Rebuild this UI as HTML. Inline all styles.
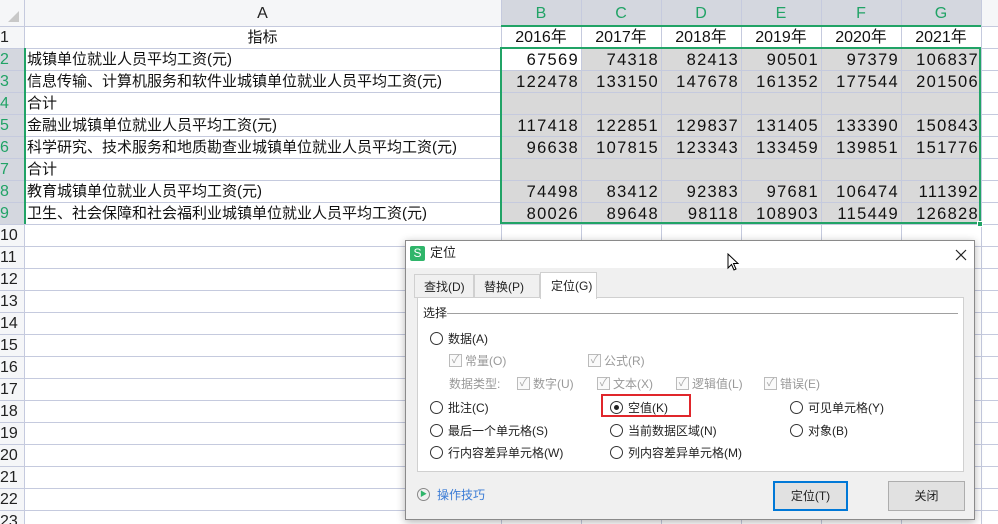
<!DOCTYPE html>
<html><head><meta charset="utf-8"><style>
*{margin:0;padding:0;box-sizing:border-box}
html,body{width:998px;height:524px;overflow:hidden}
body{background:#fff;font-family:"Liberation Sans","Noto Sans CJK SC",sans-serif;position:relative;font-size:15px;color:#111}
.a{position:absolute}
.hl{position:absolute;background:#c5cade;height:1px}
.vl{position:absolute;background:#c5cade;width:1px}
.t{position:absolute;white-space:nowrap;line-height:22px}
.n{font-size:16.5px;letter-spacing:1.3px}
.dlg{position:absolute;left:405px;top:240px;width:570px;height:280px;background:#f0f0f0;border:1px solid #8a8a8a;box-shadow:0 2px 8px rgba(0,0,0,.3);font-size:12px;color:#222}
.dlg .t{line-height:16px}
.rad{position:absolute;width:13px;height:13px;border:1px solid #333;border-radius:50%;background:#fff}
.chk{position:absolute;width:13px;height:13px;border:1px solid #bbb;background:#fafafa;color:#aaa;font-size:11px;line-height:11px;text-align:center}
.g{color:#999}
.btn{position:absolute;border:1px solid #adadad;background:#e1e1e1;text-align:center;line-height:26px;font-size:12px}
</style></head><body>
<div id="grid"></div>
<script>
var g=document.getElementById('grid'),h='';
h+='<div class="a" style="left:0;top:0;width:998px;height:26px;background:#f5f6f8"></div>';
h+='<div class="a" style="left:0;top:0;width:24px;height:524px;background:#f5f6f8"></div>';
h+='<div class="a" style="left:501px;top:0;width:480px;height:26px;background:#d4d7df"></div>';
h+='<div class="a" style="left:0;top:48px;width:24px;height:176px;background:#d4d7df"></div>';
h+='<div class="a" style="left:501px;top:48px;width:480px;height:176px;background:#d9d9d9"></div>';
h+='<div class="a" style="left:501px;top:48px;width:80px;height:22px;background:#fff"></div>';
h+='<div class="a" style="left:8px;top:11px;width:0;height:0;border-left:11px solid transparent;border-bottom:11px solid #c8c8c8"></div>';
for(var r=0;r<23;r++){var y=26+22*r;h+='<div class="hl" style="left:0;top:'+y+'px;width:998px"></div>';}
var cx=[24,501,581,661,741,821,901,981];
cx.forEach(function(x){h+='<div class="vl" style="left:'+x+'px;top:0;height:524px"></div>';});
var L=['A','B','C','D','E','F','G'];
for(var i=0;i<7;i++){h+='<div class="t" style="left:'+cx[i]+'px;width:'+(cx[i+1]-cx[i])+'px;top:3px;text-align:center;font-size:16px;color:'+(i?'#21a366':'#222')+'">'+L[i]+'</div>';}
for(var r=1;r<=23;r++){h+='<div class="t" style="left:0;top:'+(26+22*(r-1)+1)+'px;font-size:16px;color:'+(r>=2&&r<=9?'#21a366':'#222')+'">'+r+'</div>';}
var A=['指标','城镇单位就业人员平均工资(元)','信息传输、计算机服务和软件业城镇单位就业人员平均工资(元)','合计','金融业城镇单位就业人员平均工资(元)','科学研究、技术服务和地质勘查业城镇单位就业人员平均工资(元)','合计','教育城镇单位就业人员平均工资(元)','卫生、社会保障和社会福利业城镇单位就业人员平均工资(元)'];
A.forEach(function(s,i){h+='<div class="t" style="top:'+(27+22*i)+'px;'+(i==0?'left:24px;width:477px;text-align:center':'left:27px')+'">'+s+'</div>';});
var D=[['2016年','2017年','2018年','2019年','2020年','2021年'],[67569,74318,82413,90501,97379,106837],[122478,133150,147678,161352,177544,201506],[],[117418,122851,129837,131405,133390,150843],[96638,107815,123343,133459,139851,151776],[],[74498,83412,92383,97681,106474,111392],[80026,89648,98118,108903,115449,126828]];
D.forEach(function(row,i){row.forEach(function(v,j){h+='<div class="t n" style="top:'+(27+22*i)+'px;left:'+cx[j+1]+'px;width:80px;'+(i==0?'text-align:center;letter-spacing:0;font-size:16px':'text-align:right;padding-right:2px')+'">'+v+'</div>';});});
h+='<div class="a" style="left:501px;top:25px;width:480px;height:2px;background:#21a366"></div>';
h+='<div class="a" style="left:24px;top:48px;width:2px;height:176px;background:#21a366"></div>';
h+='<div class="a" style="left:500px;top:47px;width:481px;height:177px;border:2px solid #21a366"></div>';
h+='<div class="a" style="left:977px;top:221px;width:6px;height:6px;background:#21a366;border:1px solid #fff"></div>';
g.innerHTML=h;
</script>
<div class="dlg">
 <div class="a" style="left:0;top:0;width:568px;height:27px;background:#fff"></div>
 <div class="a" style="left:4px;top:5px;width:15px;height:15px;background:#2fb56a;border-radius:2px;color:#fff;font-size:12px;line-height:15px;text-align:center">S</div>
 <div class="t" style="left:24px;top:4px;font-size:13px">定位</div>
 <svg class="a" style="left:549px;top:8px" width="12" height="12" viewBox="0 0 12 12"><path d="M1 1L11 11M11 1L1 11" stroke="#222" stroke-width="1.2"/></svg>
 <svg class="a" style="left:321px;top:12px" width="14" height="20" viewBox="0 0 14 20"><path d="M1 1 L1 15 L4.5 11.5 L7 17 L9 16 L6.5 10.5 L11 10.5 Z" fill="#fff" stroke="#000" stroke-width="1"/></svg>
 <div class="a" style="left:8px;top:33px;width:60px;height:24px;border:1px solid #d0d0d0;background:#f0f0f0"></div>
 <div class="t" style="left:18px;top:38px">查找(D)</div>
 <div class="a" style="left:68px;top:33px;width:66px;height:24px;border:1px solid #d0d0d0;background:#f0f0f0"></div>
 <div class="t" style="left:78px;top:38px">替换(P)</div>
 <div class="a" style="left:11px;top:56px;width:547px;height:175px;border:1px solid #d0d0d0;background:#fff"></div>
 <div class="a" style="left:134px;top:31px;width:57px;height:27px;border:1px solid #d0d0d0;border-bottom:none;background:#fff"></div>
 <div class="t" style="left:145px;top:37px">定位(G)</div>
 <div class="t" style="left:17px;top:64px">选择</div>
 <div class="a" style="left:41px;top:72px;width:511px;height:1px;background:#a0a0a0"></div>
 <div class="rad" style="left:24px;top:91px"></div><div class="t" style="left:42px;top:90px">数据(A)</div>
 <div class="chk" style="left:43px;top:113px">✓</div><div class="t g" style="left:59px;top:112px">常量(O)</div>
 <div class="chk" style="left:182px;top:113px">✓</div><div class="t g" style="left:198px;top:112px">公式(R)</div>
 <div class="t g" style="left:43px;top:135px">数据类型:</div>
 <div class="chk" style="left:111px;top:136px">✓</div><div class="t g" style="left:127px;top:135px">数字(U)</div>
 <div class="chk" style="left:191px;top:136px">✓</div><div class="t g" style="left:207px;top:135px">文本(X)</div>
 <div class="chk" style="left:270px;top:136px">✓</div><div class="t g" style="left:286px;top:135px">逻辑值(L)</div>
 <div class="chk" style="left:358px;top:136px">✓</div><div class="t g" style="left:374px;top:135px">错误(E)</div>
 <div class="rad" style="left:24px;top:160px"></div><div class="t" style="left:42px;top:159px">批注(C)</div>
 <div class="a" style="left:195px;top:153px;width:90px;height:23px;border:2px solid #e0262b"></div>
 <div class="rad" style="left:204px;top:160px"></div><div class="a" style="left:208px;top:164px;width:5px;height:5px;border-radius:50%;background:#222"></div><div class="t" style="left:222px;top:159px">空值(K)</div>
 <div class="rad" style="left:384px;top:160px"></div><div class="t" style="left:402px;top:159px">可见单元格(Y)</div>
 <div class="rad" style="left:24px;top:183px"></div><div class="t" style="left:42px;top:182px">最后一个单元格(S)</div>
 <div class="rad" style="left:204px;top:183px"></div><div class="t" style="left:222px;top:182px">当前数据区域(N)</div>
 <div class="rad" style="left:384px;top:183px"></div><div class="t" style="left:402px;top:182px">对象(B)</div>
 <div class="rad" style="left:24px;top:205px"></div><div class="t" style="left:42px;top:204px">行内容差异单元格(W)</div>
 <div class="rad" style="left:204px;top:205px"></div><div class="t" style="left:222px;top:204px">列内容差异单元格(M)</div>
 <div class="a" style="left:11px;top:247px;width:13px;height:13px;border:1px solid #888;border-radius:50%;color:#2fb56a;font-size:7px;line-height:11px;text-align:center">▶</div>
 <div class="t" style="left:31px;top:246px;color:#3a7bd5">操作技巧</div>
 <div class="btn" style="left:367px;top:240px;width:75px;height:30px;border:2px solid #0078d7">定位(T)</div>
 <div class="btn" style="left:482px;top:240px;width:77px;height:30px;line-height:28px">关闭</div>
</div>
</body></html>
